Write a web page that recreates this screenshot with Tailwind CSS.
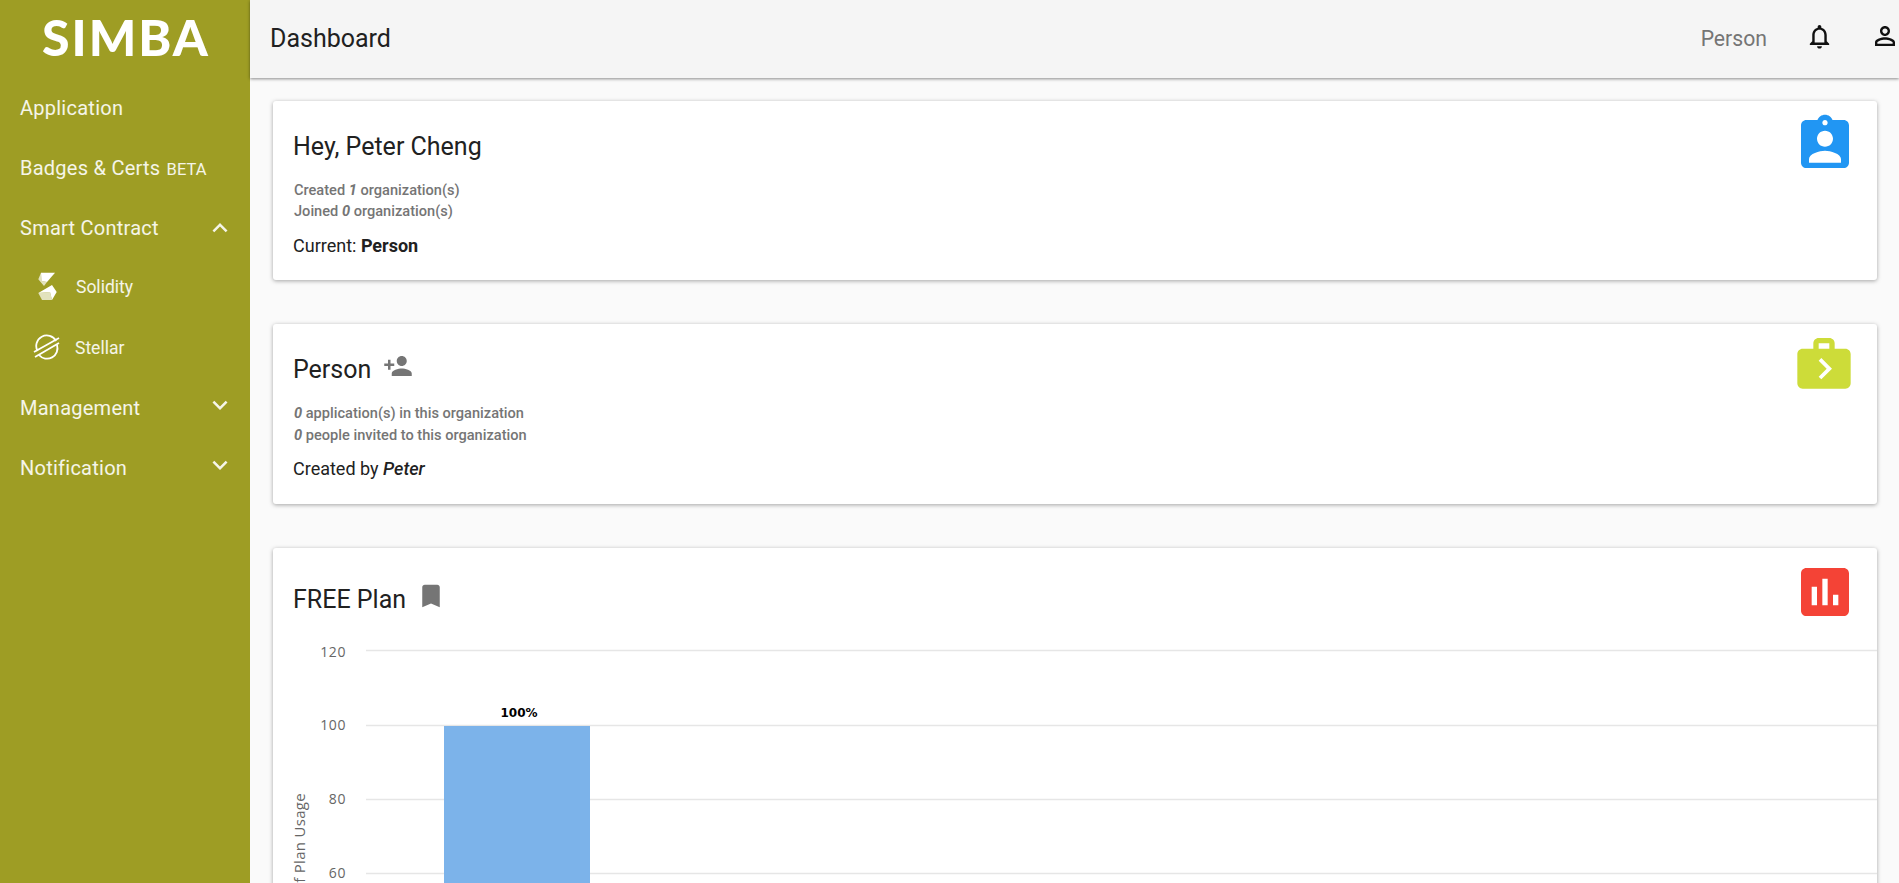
<!DOCTYPE html>
<html lang="en">
<head>
    <meta charset="UTF-8">
    <meta name="viewport" content="width=device-width, initial-scale=1.0">
    <title>SIMBA Dashboard</title>
    <script src="https://cdn.jsdelivr.net/npm/@tailwindcss/browser@4"></script>
</head>
<body class="bg-[#fafafa] font-[Roboto,sans-serif] h-screen overflow-hidden">
    <div class="flex h-[883px] overflow-hidden">
        <!-- Sidebar -->
        <aside class="w-[250px] shrink-0 bg-[#9e9d24] text-white">
            <div class="h-[78px] flex items-center justify-center pb-[5px] pl-[2px] font-[Lato,sans-serif] font-black text-[50px] tracking-[2px] leading-none">SIMBA</div>
            <nav class="text-[20px] tracking-[0.25px] text-white/90">
                <a class="h-[60px] flex items-center pl-5">Application</a>
                <a class="h-[60px] flex items-center pl-5"><span>Badges &amp; Certs <span class="ml-[1px] text-[16.5px] tracking-normal">BETA</span></span></a>
                <a class="h-[60px] flex items-center justify-between pl-5 pr-[15px]">
                    Smart Contract
                    <svg class="w-[30px] h-[30px]" fill="currentColor" viewBox="0 0 24 24"><path d="M12 8l-6 6 1.41 1.41L12 10.83l4.59 4.58L18 14z"/></svg>
                </a>
                <a class="h-[60px] flex items-center pl-[37px] gap-[17px] text-[17.5px] tracking-normal -translate-y-[1px]">
                    <svg class="w-[22px] h-[30px]" viewBox="0 0 22 30">
                        <path fill="#fff" d="M4 .7H18L10 10 4.5 9z"/>
                        <path fill="#fff" fill-opacity=".7" d="M4 .7 4.5 9 10 10 7 14 1.3 7.3z"/>
                        <path fill="#fff" d="M15 13 19.7 20 15 28 13 20 1.3 21z"/>
                        <path fill="#fff" fill-opacity=".7" d="M1.3 21 13 20 15 28H5z"/>
                    </svg>
                    Solidity
                </a>
                <a class="h-[60px] flex items-center pl-[33px] gap-[14px] text-[17.5px] tracking-normal">
                    <svg class="w-[28px] h-[28px]" fill="none" stroke="#fff" stroke-width="1.8" viewBox="0 0 28 28">
                        <path d="M4.5 17A10.5 10.5 0 0 1 23 7"/>
                        <path d="M24 11A10.5 10.5 0 0 1 6 21"/>
                        <path d="M1 18 26 4"/>
                        <path d="M2 23 26 9"/>
                    </svg>
                    Stellar
                </a>
                <a class="h-[60px] flex items-center justify-between pl-5 pr-[15px]">
                    Management
                    <svg class="w-[30px] h-[30px] -translate-y-[3px]" fill="currentColor" viewBox="0 0 24 24"><path d="M16.59 8.59L12 13.17 7.41 8.59 6 10l6 6 6-6z"/></svg>
                </a>
                <a class="h-[60px] flex items-center justify-between pl-5 pr-[15px]">
                    Notification
                    <svg class="w-[30px] h-[30px] -translate-y-[3px]" fill="currentColor" viewBox="0 0 24 24"><path d="M16.59 8.59L12 13.17 7.41 8.59 6 10l6 6 6-6z"/></svg>
                </a>
            </nav>
        </aside>

        <div class="flex-1 min-w-0 flex flex-col">
            <!-- Top bar -->
            <header class="h-[78px] shrink-0 bg-[#f5f5f5] flex items-center pl-5 shadow-[0_1px_3px_rgba(0,0,0,0.45)] relative z-10">
                <h1 class="text-[25px] text-[#212121] flex-1">Dashboard</h1>
                <span class="text-[21.2px] text-[#757575] mr-[38px]">Person</span>
                <svg class="w-[29px] h-[29px] mr-[36px] -translate-y-[3px] text-[#111]" fill="currentColor" viewBox="0 0 24 24"><path d="M12 22c1.1 0 2-.9 2-2h-4c0 1.1.9 2 2 2zm6-6v-5c0-3.07-1.63-5.64-4.5-6.32V4c0-.83-.67-1.5-1.5-1.5s-1.5.67-1.5 1.5v.68C7.64 5.36 6 7.92 6 11v5l-2 2v1h16v-1l-2-2zm-2 1H8v-6c0-2.48 1.51-4.5 4-4.5s4 2.02 4 4.5v6z"/></svg>
                <svg class="w-[30px] h-[30px] shrink-0 -mr-[1px] -translate-y-[3px] text-[#111]" fill="currentColor" viewBox="0 0 24 24"><path d="M12 5.9c1.16 0 2.1.94 2.1 2.1s-.94 2.1-2.1 2.1S9.9 9.16 9.9 8s.94-2.1 2.1-2.1m0 9c2.97 0 6.1 1.46 6.1 2.1v1.1H5.9V17c0-.64 3.13-2.1 6.1-2.1M12 4C9.79 4 8 5.79 8 8s1.79 4 4 4 4-1.79 4-4-1.79-4-4-4zm0 9c-2.67 0-8 1.34-8 4v3h16v-3c0-2.66-5.33-4-8-4z"/></svg>
            </header>

            <!-- Cards -->
            <main class="flex-1 min-h-0 overflow-hidden pt-[23px] pl-[23px] pr-[22px] flex flex-col gap-[44px]">
                <section class="shrink-0 h-[179px] bg-white rounded-[3px] shadow-[0_1px_4px_rgba(0,0,0,0.35)] pl-5 pr-5 flex justify-between">
                    <div>
                        <h2 class="mt-[30px] text-[25px] leading-[32px] text-[#212121]">Hey, Peter Cheng</h2>
                        <p class="mt-[17px] ml-[1px] text-[14.6px] leading-[21px] text-[#757575] font-medium">Created <em class="font-bold">1</em> organization(s)<br>Joined <em class="font-bold">0</em> organization(s)</p>
                        <p class="mt-[11.5px] text-[18px] leading-[24px] text-[#212121]">Current: <b>Person</b></p>
                    </div>
                    <svg class="w-[64px] h-[64px] mt-[11px] text-[#2196f3]" fill="currentColor" viewBox="0 0 24 24"><path d="M19 3h-4.18C14.4 1.84 13.3 1 12 1c-1.3 0-2.4.84-2.82 2H5c-1.1 0-2 .9-2 2v14c0 1.1.9 2 2 2h14c1.1 0 2-.9 2-2V5c0-1.1-.9-2-2-2zm-7 0c.55 0 1 .45 1 1s-.45 1-1 1-1-.45-1-1 .45-1 1-1zm0 4c1.66 0 3 1.34 3 3s-1.34 3-3 3-3-1.34-3-3 1.34-3 3-3zm6 12H6v-1.4c0-2 4-3.1 6-3.1s6 1.1 6 3.1V19z"/></svg>
                </section>

                <section class="shrink-0 h-[180px] bg-white rounded-[3px] shadow-[0_1px_4px_rgba(0,0,0,0.35)] pl-5 pr-5 flex justify-between">
                    <div>
                        <div class="mt-[30px] flex items-start">
                            <h2 class="text-[25px] leading-[32px] text-[#212121]">Person</h2>
                            <svg class="w-[30px] h-[30px] ml-[12px] -mt-[3px] text-[#757575]" fill="currentColor" viewBox="0 0 24 24"><path d="M15 12c2.21 0 4-1.79 4-4s-1.79-4-4-4-4 1.79-4 4 1.79 4 4 4zm-9-2V7H4v3H1v2h3v3h2v-3h3v-2H6zm9 4c-2.67 0-8 1.34-8 4v2h16v-2c0-2.66-5.33-4-8-4z"/></svg>
                        </div>
                        <p class="mt-[17px] ml-[1px] text-[14.6px] leading-[21.5px] text-[#757575] font-medium"><em class="font-bold">0</em> application(s) in this organization<br><em class="font-bold">0</em> people invited to this organization</p>
                        <p class="mt-[11px] text-[18px] leading-[24px] text-[#212121]">Created by <b class="font-medium italic">Peter</b></p>
                    </div>
                    <svg class="w-[64px] h-[64px] mt-[6px] -translate-x-[1px] text-[#cddc39]" fill="currentColor" viewBox="0 0 24 24"><path d="M20 7h-4V5c0-.55-.22-1.05-.59-1.41C15.05 3.22 14.55 3 14 3h-4c-1.1 0-2 .9-2 2v2H4c-1.1 0-2 .9-2 2v11c0 1.1.9 2 2 2h16c1.1 0 2-.9 2-2V9c0-1.1-.9-2-2-2zM10 5h4v2h-4V5zm1 13.5l-1-1 3-3-3-3 1-1 4 4-4 4z"/></svg>
                </section>

                <section class="shrink-0 h-[500px] bg-white rounded-[3px] shadow-[0_1px_4px_rgba(0,0,0,0.35)]">
                    <div class="pl-5 pr-5 flex justify-between">
                        <div class="mt-[36px] flex items-start">
                            <h2 class="text-[25px] leading-[32px] text-[#212121]">FREE Plan</h2>
                            <svg class="w-[30px] h-[30px] ml-[10px] -mt-[3px] text-[#757575]" fill="currentColor" viewBox="0 0 24 24"><path d="M17 3H7c-1.1 0-1.99.9-1.99 2L5 21l7-3 7 3V5c0-1.1-.9-2-2-2z"/></svg>
                        </div>
                        <svg class="w-[64px] h-[64px] mt-[12px] text-[#f44336]" fill="currentColor" viewBox="0 0 24 24"><path d="M19 3H5c-1.1 0-2 .9-2 2v14c0 1.1.9 2 2 2h14c1.1 0 2-.9 2-2V5c0-1.1-.9-2-2-2zM9 17H7v-7h2v7zm4 0h-2V7h2v10zm4 0h-2v-4h2v4z"/></svg>
                    </div>
                    <!-- Usage chart, top edge at y=632 on the page -->
                    <svg class="block w-full h-[300px] mt-[8px]" viewBox="0 0 1604 300" preserveAspectRatio="xMinYMin">
                        <g stroke="#e6e6e6" stroke-width="1.5">
                            <path d="M93 18.5H1604"/>
                            <path d="M93 93.5H1604"/>
                            <path d="M93 167.5H1604"/>
                            <path d="M93 241.5H1604"/>
                        </g>
                        <rect x="171" y="94" width="146" height="206" fill="#7cb3ea"/>
                        <g font-family="Open Sans, sans-serif" font-size="14" fill="#666" text-anchor="end" letter-spacing=".6">
                            <text x="73" y="25">120</text>
                            <text x="73" y="98">100</text>
                            <text x="73" y="172">80</text>
                            <text x="73" y="246">60</text>
                        </g>
                        <text x="246" y="85" font-family="DejaVu Sans, sans-serif" font-size="12" font-weight="700" text-anchor="middle" fill="#000">100%</text>
                        <text transform="translate(32 161) rotate(-90)" font-family="Open Sans, sans-serif" font-size="15" fill="#666" letter-spacing=".3" text-anchor="end">% of Plan Usage</text>
                    </svg>
                </section>
            </main>
        </div>
    </div>
</body>
</html>
